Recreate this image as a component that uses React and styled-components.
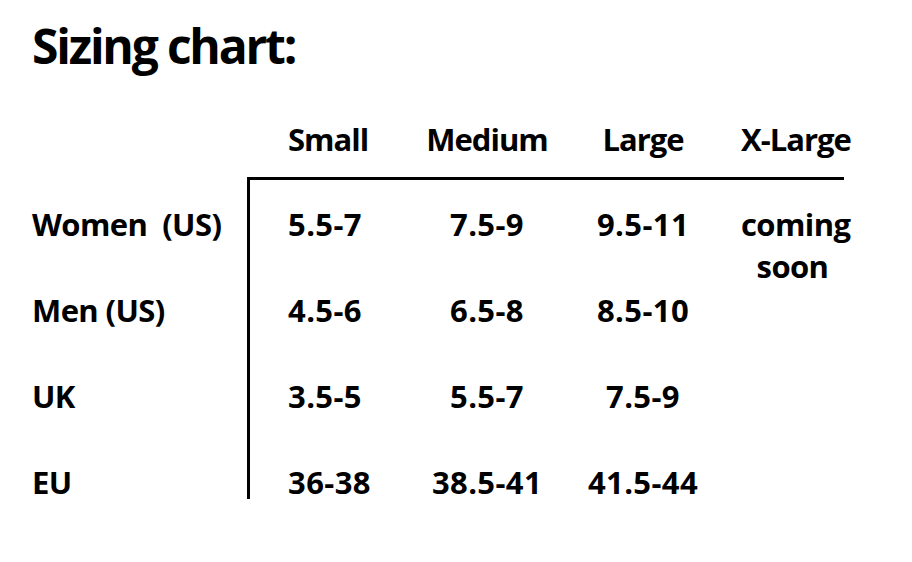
import React from 'react'
import styled, { createGlobalStyle } from 'styled-components'

const GlobalStyle = createGlobalStyle`
  body {
    margin: 0;
    background: #fff;
    color: #000;
    font-family: 'Open Sans', 'Noto Sans', sans-serif;
  }
`

const Page = styled.div`
  padding: 16px 0 0 32px;
`

const Title = styled.h1`
  margin: 0;
  font-size: 48px;
  line-height: 60px;
  font-weight: 700;
  letter-spacing: -2.2px;
`

const Table = styled.div`
  display: grid;
  grid-template-columns: 215px max-content;
  margin-top: 46px;
  font-size: 31px;
  font-weight: 700;
  line-height: 34px;
  letter-spacing: -0.6px;
`

const Columns = styled.div`
  display: grid;
  grid-template-columns: 159px 156px 156px 123px;
  grid-auto-rows: 34px;
  row-gap: 52px;
  padding-left: 3px;
  margin-bottom: ${(p) => (p.$head ? '21px' : '0')};
  letter-spacing: ${(p) => (p.$head ? '-1px' : '0.4px')};
`

const Body = styled(Columns)`
  padding-left: 0;
  padding-top: 27px;
  border-top: 3px solid #000;
  border-left: 3px solid #000;
`

const Labels = styled.div`
  display: flex;
  flex-direction: column;
  gap: 52px;
  padding-top: 30px;
`

const Label = styled.div`
  white-space: pre;
`

const Cell = styled.div`
  white-space: nowrap;
  text-align: ${(p) => (p.$left ? 'left' : 'center')};
  padding-left: ${(p) => (p.$left ? '38px' : p.$wide ? '20px' : '0')};
  grid-column: ${(p) => p.$col};
`

const Soon = styled(Cell)`
  grid-row: 1 / span 2;
  line-height: 42px;
  margin-top: -4px;
  white-space: normal;
  letter-spacing: -0.6px;
`

const sizes = ['Small', 'Medium', 'Large', 'X-Large']

const rows = [
  { label: 'Women  (US)', values: ['5.5-7', '7.5-9', '9.5-11'] },
  { label: 'Men (US)', values: ['4.5-6', '6.5-8', '8.5-10'] },
  { label: 'UK', values: ['3.5-5', '5.5-7', '7.5-9'] },
  { label: 'EU', values: ['36-38', '38.5-41', '41.5-44'] },
]

export default function App() {
  return (
    <Page>
      <GlobalStyle />
      <Title>Sizing chart:</Title>
      <Table>
        <div />
        <Columns $head>
          {sizes.map((s, i) => (
            <Cell key={s} $left={i === 0} $wide={i === 3}>
              {s}
            </Cell>
          ))}
        </Columns>
        <Labels>
          {rows.map((r) => (
            <Label key={r.label}>{r.label}</Label>
          ))}
        </Labels>
        <Body>
          {rows.map((r) =>
            r.values.map((v, i) => (
              <Cell key={r.label + i} $left={i === 0} $col={i + 1}>
                {v}
              </Cell>
            ))
          )}
          <Soon $wide $col={4}>
            coming
            <br />
            soon
          </Soon>
        </Body>
      </Table>
    </Page>
  )
}
